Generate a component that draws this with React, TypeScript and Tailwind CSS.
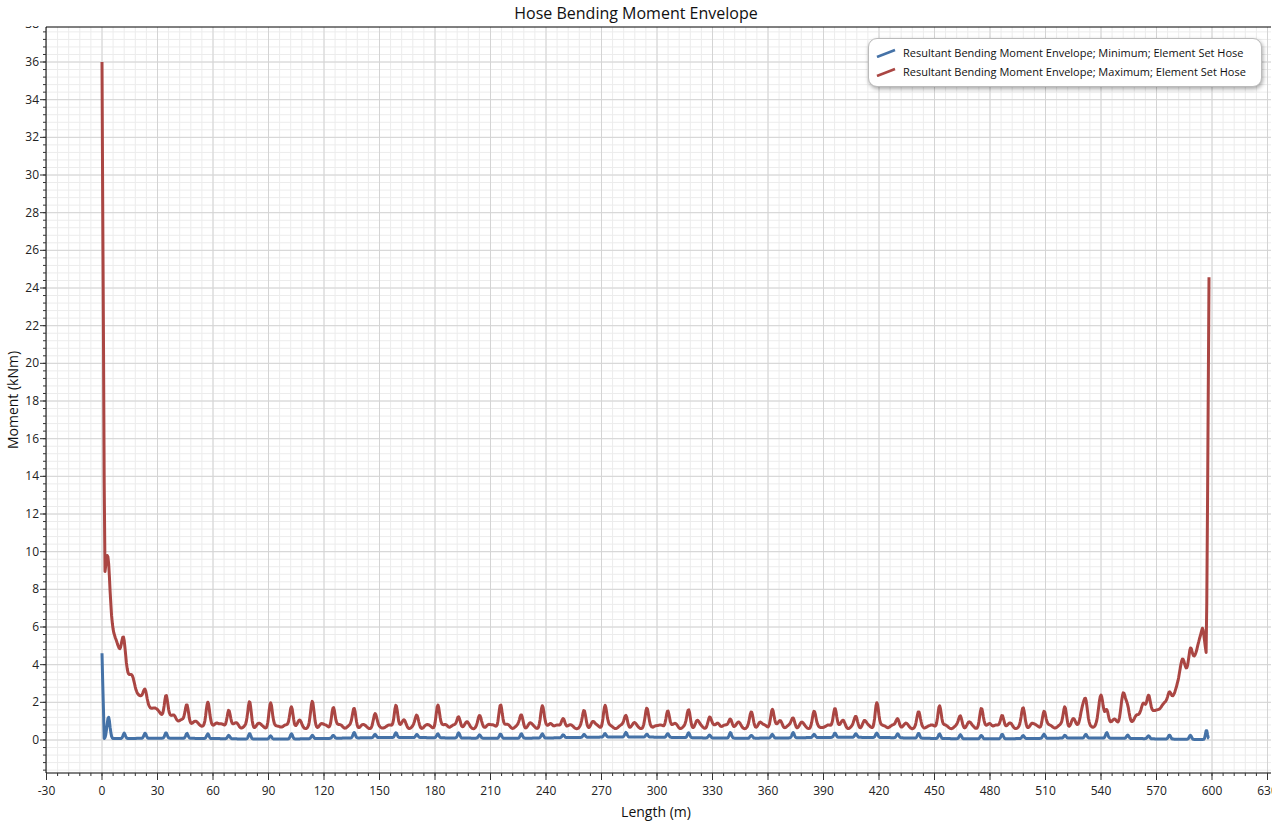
import React from "react";

const X0 = 102, SX = 1.85, Y0 = 740, SY = 18.833;
const px = (x: number) => X0 + x * SX;
const py = (y: number) => Y0 - y * SY;

function rnd(i: number) {
  const s = Math.sin(i * 127.1 + 311.7) * 43758.5453;
  return s - Math.floor(s);
}
const g = (x: number, c: number, w: number) => Math.exp(-((x - c) * (x - c)) / (2 * w * w));

function red(x: number) {
  if (x < 1.5) return 36 - (x / 1.5) * 28;
  let y = 0.7 + 0.1 * Math.sin(x * 0.9);
  y += 7.3 * Math.exp(-(x - 1.5) / 13);
  y += 2.6 * g(x, 3.2, 1.1);
  y += 0.6 * g(x, 11, 0.8);
  for (let k = 0; k < 56; k++) {
    const c = 12 + k * 11.3;
    const a = 0.45 + rnd(k) * 0.85;
    y += a * g(x, c, 0.9);
    y += 0.35 * rnd(k + 100) * g(x, c + 4.5, 1);
  }
  y += 1.0 * g(x, 530, 1.2) + 1.5 * g(x, 540, 1.2) + 1.5 * g(x, 552, 1.2) + 0.8 * g(x, 563, 1.2) + 1.3 * g(x, 584, 1.3);
  if (x < 595) y += 5.2 * Math.exp((x - 595) / 14);
  else if (x < 597) y = 6 - (x - 595) * 0.75;
  else y = 4.5 + ((x - 597) / 1.5) * 21.5;
  return y;
}
function blue(x: number) {
  let y = 0.05 + 0.03 * Math.sin(x * 0.05);
  if (x < 1.2) y = 4.6 - (x / 1.2) * 4.6;
  y += 1.15 * g(x, 3.5, 0.8);
  for (let k = 0; k < 56; k++) {
    const c = 12 + k * 11.3;
    y += (0.15 + rnd(k + 7) * 0.15) * g(x, c, 0.6);
  }
  y += 0.08 * g(x, 300, 150);
  y += 0.5 * g(x, 597, 0.5);
  return Math.max(y, 0);
}
function path(f: (x: number) => number) {
  const pts: string[] = [];
  for (let x = 0; x <= 598.5; x += 0.4) pts.push(`${px(x).toFixed(1)},${py(f(x)).toFixed(1)}`);
  return "M" + pts.join("L");
}

export default function App() {
  const L = 46, T = 27, R = 1271, B = 773;
  const minorX: number[] = [];
  for (let v = -30; v <= 630; v += 6) minorX.push(v);
  const minorY: number[] = [];
  for (let v = -1.6; v <= 38.01; v += 0.4) minorY.push(v);
  const majX: number[] = [];
  for (let v = -30; v <= 630; v += 30) majX.push(v);
  const majY: number[] = [];
  for (let v = 0; v <= 38; v += 2) majY.push(v);
  const font = { fontFamily: "'Open Sans','Noto Sans',sans-serif" };
  return (
    <div className="w-[1272px] h-[821px] bg-white relative overflow-hidden" style={font}>
      <div className="h-[26px] text-center text-[16px] text-[#111] leading-[26px]">Hose Bending Moment Envelope</div>
      <svg width={1272} height={795} viewBox="0 26 1272 795" className="block">
        <defs>
          <clipPath id="c"><rect x={L} y={T} width={R - L} height={B - T} /></clipPath>
        </defs>
        <g clipPath="url(#c)">
          {minorX.map((v) => <line key={"mx" + v} x1={px(v)} x2={px(v)} y1={T} y2={B} stroke="#ececec" strokeWidth={1} />)}
          {minorY.map((v) => <line key={"my" + v} y1={py(v)} y2={py(v)} x1={L} x2={R} stroke="#ececec" strokeWidth={1} />)}
          {majX.map((v) => <line key={"Mx" + v} x1={px(v)} x2={px(v)} y1={T} y2={B} stroke="#d4d4d4" strokeWidth={1} />)}
          {majY.map((v) => <line key={"My" + v} y1={py(v)} y2={py(v)} x1={L} x2={R} stroke="#d4d4d4" strokeWidth={1} />)}
          <path d={path(blue)} fill="none" stroke="#4572a7" strokeWidth={3} strokeLinejoin="round" />
          <path d={path(red)} fill="none" stroke="#aa4643" strokeWidth={3} strokeLinejoin="round" />
        </g>
        <line x1={L} x2={L} y1={T} y2={B} stroke="#000" />
        <line x1={L} x2={R} y1={B} y2={B} stroke="#000" />
        <line x1={L} x2={R} y1={T} y2={T} stroke="#000" />
        {minorY.map((v) => <line key={"ty" + v} x1={L - 3} x2={L} y1={py(v)} y2={py(v)} stroke="#333" />)}
        {majY.map((v) => <line key={"tY" + v} x1={L - 6} x2={L} y1={py(v)} y2={py(v)} stroke="#333" />)}
        {minorX.map((v) => <line key={"tx" + v} y1={B} y2={B + 3} x1={px(v)} x2={px(v)} stroke="#333" />)}
        {majX.map((v) => <line key={"tX" + v} y1={B} y2={B + 7} x1={px(v)} x2={px(v)} stroke="#333" />)}
        {majY.map((v) => <text key={"ly" + v} x={L - 7} y={py(v) + 4} textAnchor="end" fontSize={12} fill="#222">{v}</text>)}
        {majX.map((v) => <text key={"lx" + v} x={px(v)} y={B + 22} textAnchor="middle" fontSize={12} fill="#222">{v}</text>)}
        <text x={656} y={817} textAnchor="middle" fontSize={14} fill="#111">Length (m)</text>
        <text transform="translate(18 400) rotate(-90)" textAnchor="middle" fontSize={14} fill="#111">Moment (kNm)</text>
      </svg>
      <div className="absolute left-[868px] top-[38px] w-[394px] h-[49px] bg-white border border-[#bbb] rounded-[9px] shadow-[1px_2px_4px_rgba(0,0,0,0.35)] flex flex-col justify-center gap-[3px] pl-[7px] text-[11px] text-[#111]">
        {[
          ["#4572a7", "Resultant Bending Moment Envelope; Minimum; Element Set Hose"],
          ["#aa4643", "Resultant Bending Moment Envelope; Maximum; Element Set Hose"],
        ].map(([c, t]) => (
          <div key={t} className="flex items-center gap-[7px] leading-[16px]">
            <svg width={20} height={10}><line x1={1} y1={9} x2={19} y2={2} stroke={c} strokeWidth={2.6} /></svg>
            <span>{t}</span>
          </div>
        ))}
      </div>
    </div>
  );
}
